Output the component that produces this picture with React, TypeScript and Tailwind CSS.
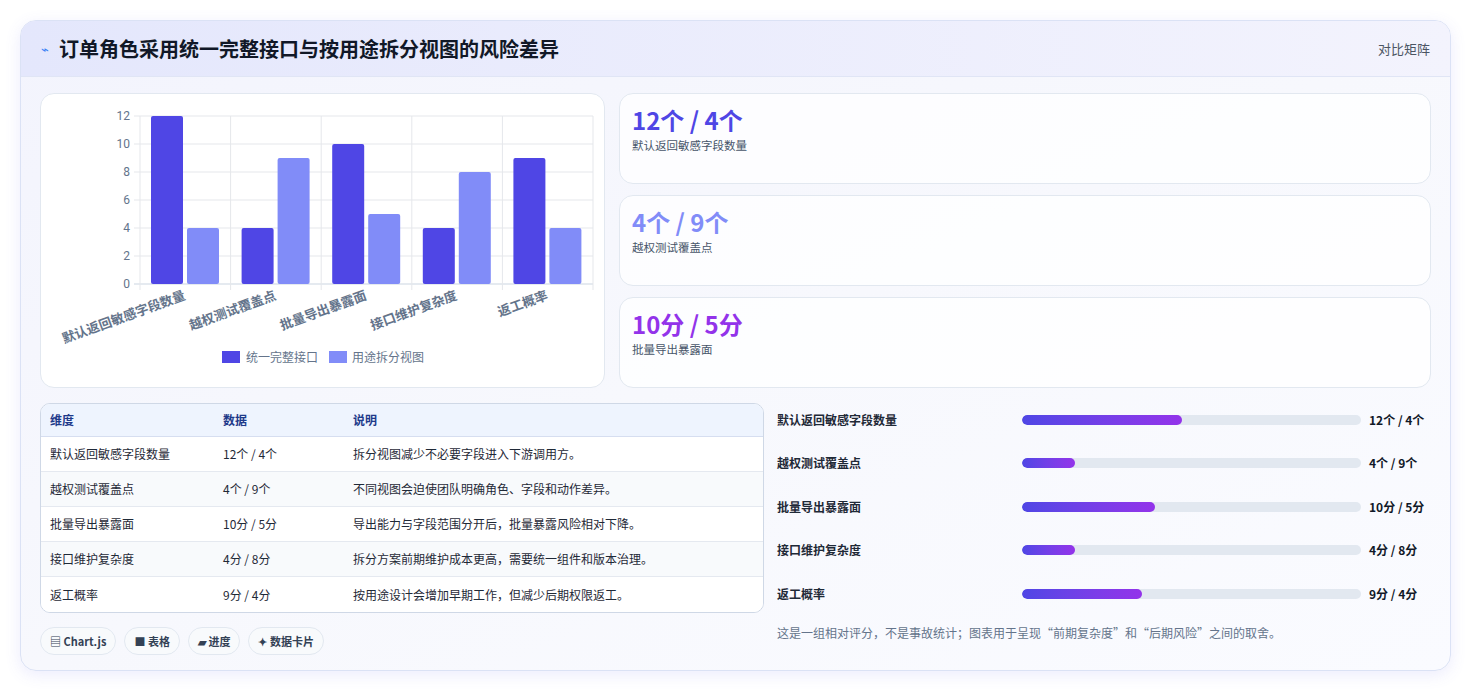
import React from "react";

const cats = ["默认返回敏感字段数量", "越权测试覆盖点", "批量导出暴露面", "接口维护复杂度", "返工概率"];
const a = [12, 4, 10, 4, 9];
const b = [4, 9, 5, 8, 4];
const rows = [
  ["默认返回敏感字段数量", "12个 / 4个", "拆分视图减少不必要字段进入下游调用方。", 12],
  ["越权测试覆盖点", "4个 / 9个", "不同视图会迫使团队明确角色、字段和动作差异。", 4],
  ["批量导出暴露面", "10分 / 5分", "导出能力与字段范围分开后，批量暴露风险相对下降。", 10],
  ["接口维护复杂度", "4分 / 8分", "拆分方案前期维护成本更高，需要统一组件和版本治理。", 4],
  ["返工概率", "9分 / 4分", "按用途设计会增加早期工作，但减少后期权限返工。", 9],
] as const;

function Chart() {
  const x0 = 99, x1 = 552, y0 = 190, unit = 14;
  const cw = (x1 - x0) / 5;
  return (
    <svg width="564" height="294" viewBox="0 0 564 294" style={{ fontFamily: "Roboto, 'Noto Sans CJK SC', sans-serif" }}>
      {[0, 2, 4, 6, 8, 10, 12].map((v) => (
        <g key={v}>
          <line x1={x0 - 6} x2={x1} y1={y0 - v * unit} y2={y0 - v * unit} stroke={v === 0 ? "#cbd5e1" : "#e5e7eb"} />
          <text x={x0 - 10} y={y0 - v * unit + 4} textAnchor="end" fontSize="12" fill="#64748b">{v}</text>
        </g>
      ))}
      {[0, 1, 2, 3, 4, 5].map((i) => (
        <line key={i} x1={x0 + i * cw} x2={x0 + i * cw} y1={22} y2={y0 + 6} stroke="#e5e7eb" />
      ))}
      {cats.map((c, i) => {
        const cx = x0 + i * cw;
        return (
          <g key={c}>
            <rect x={cx + 11} y={y0 - a[i] * unit} width={32} height={a[i] * unit} rx="2" fill="#4f46e5" />
            <rect x={cx + 47} y={y0 - b[i] * unit} width={32} height={b[i] * unit} rx="2" fill="#818cf8" />
            <text transform={`translate(${cx + cw / 2 + 1},${205}) rotate(-20)`} textAnchor="end" fontSize="13" fontWeight="600" fill="#64748b">{c}</text>
          </g>
        );
      })}
      <rect x="181" y="257" width="18" height="12" fill="#4f46e5" />
      <text x="205" y="268" fontSize="12" fill="#64748b">统一完整接口</text>
      <rect x="288" y="257" width="18" height="12" fill="#818cf8" />
      <text x="311" y="268" fontSize="12" fill="#64748b">用途拆分视图</text>
    </svg>
  );
}

export default function App() {
  const font = { fontFamily: "'Noto Sans CJK SC', 'Noto Sans', sans-serif" };
  return (
    <div className="w-[1471px] h-[692px] bg-white pt-[20px] pl-[20px]" style={font}>
      <div className="w-[1431px] h-[651px] rounded-[16px] border border-[#dbe2f5] bg-gradient-to-br from-[#f3f4fd] via-[#f7f8fd] to-[#fafbff] shadow-[0_4px_16px_rgba(99,102,241,0.12)] overflow-hidden flex flex-col">
        <div className="h-[56px] shrink-0 flex items-center justify-between px-[20px] bg-gradient-to-r from-[#e4e7fc] to-[#f3f3fd] border-b border-[#e0e5f5]">
          <div className="flex items-center gap-[10px]">
            <span className="text-[#3b82f6] text-[13px]">⌁</span>
            <span className="text-[20px] font-bold text-[#111827]">订单角色采用统一完整接口与按用途拆分视图的风险差异</span>
          </div>
          <span className="text-[13px] text-[#4b5563]">对比矩阵</span>
        </div>
        <div className="flex-1 px-[19px] pt-[16px] flex flex-col">
          <div className="flex gap-[14px]">
            <div className="w-[565px] h-[295px] shrink-0 rounded-[14px] border border-[#e2e8f0] bg-white">
              <Chart />
            </div>
            <div className="flex-1 flex flex-col gap-[11px]">
              {[
                ["12个 / 4个", "默认返回敏感字段数量", "text-[#4f46e5]"],
                ["4个 / 9个", "越权测试覆盖点", "text-[#818cf8]"],
                ["10分 / 5分", "批量导出暴露面", "text-[#9333ea]"],
              ].map(([v, l, c]) => (
                <div key={l} className="h-[91px] rounded-[14px] border border-[#e2e8f0] bg-white/80 px-[12px] pt-[10px]">
                  <div className={`text-[24px] font-bold leading-[32px] ${c}`}>{v}</div>
                  <div className="text-[11.5px] text-[#475569] mt-[1px]">{l}</div>
                </div>
              ))}
            </div>
          </div>
          <div className="flex gap-[13px] mt-[15px]">
            <div className="w-[724px] shrink-0">
              <div className="rounded-[10px] border border-[#cfd8e6] bg-white overflow-hidden">
                <div className="flex h-[33px] items-center bg-[#eef4fe] border-b border-[#d6def0] text-[12px] font-bold text-[#1e3a8a]">
                  <div className="w-[182px] pl-[9px]">维度</div>
                  <div className="w-[130px]">数据</div>
                  <div>说明</div>
                </div>
                {rows.map((r, i) => (
                  <div key={r[0]} className={`flex h-[35px] items-center text-[12px] text-[#1f2937] ${i < 4 ? "border-b border-[#e5e9f0]" : ""} ${i % 2 === 1 ? "bg-[#f8fafc]" : "bg-white"}`}>
                    <div className="w-[182px] pl-[9px]">{r[0]}</div>
                    <div className="w-[130px]">{r[1]}</div>
                    <div>{r[2]}</div>
                  </div>
                ))}
              </div>
              <div className="flex gap-[8px] mt-[14px]">
                {["▤ Chart.js", "■ 表格", "▰ 进度", "✦ 数据卡片"].map((t) => (
                  <span key={t} className="h-[28px] px-[9px] flex items-center rounded-full border border-[#e2e8f0] bg-[#f8fafc] text-[11px] font-semibold text-[#334155]">{t}</span>
                ))}
              </div>
            </div>
            <div className="flex-1 flex flex-col -mt-[5px]">
              {rows.map((r) => (
                <div key={r[0]} className="h-[43.5px] flex items-center">
                  <div className="w-[245px] text-[12px] font-semibold text-[#1f2937]">{r[0]}</div>
                  <div className="w-[339px] h-[10px] rounded-full bg-[#e2e8f0] overflow-hidden">
                    <div className="h-full rounded-full bg-gradient-to-r from-[#4f46e5] to-[#9333ea]" style={{ width: `${((r[3] as number) / 25.5) * 100}%` }} />
                  </div>
                  <div className="ml-[8px] text-[12px] font-bold text-[#111827]">{r[1]}</div>
                </div>
              ))}
              <div className="mt-[8px] text-[12px] text-[#64748b]">这是一组相对评分，不是事故统计；图表用于呈现“前期复杂度”和“后期风险”之间的取舍。</div>
            </div>
          </div>
        </div>
      </div>
    </div>
  );
}
